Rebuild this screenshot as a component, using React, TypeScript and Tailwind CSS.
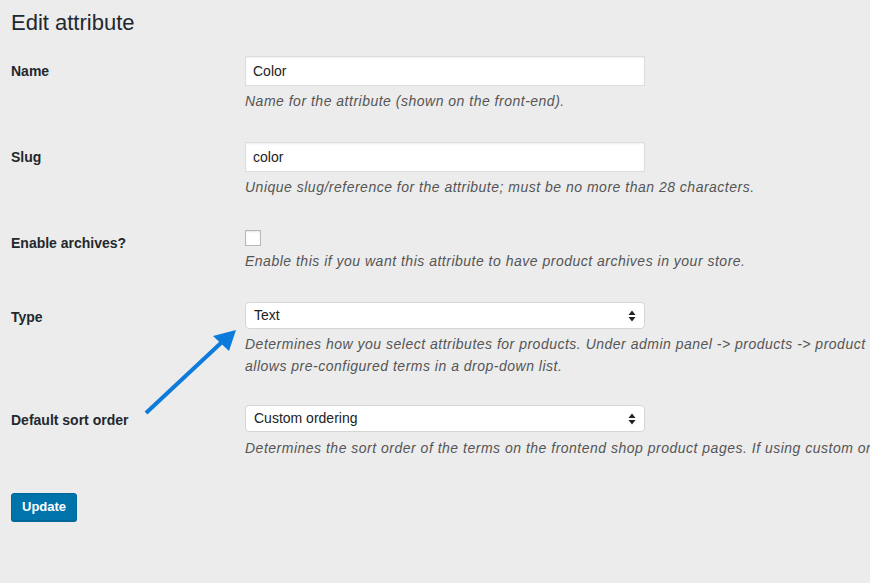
import React from 'react';

const font = { fontFamily: '"Liberation Sans", Arial, sans-serif' };

const Arrows = () => (
  <svg width="8" height="12" viewBox="0 0 8 12" className="absolute right-[8px] top-1/2 -translate-y-1/2 pointer-events-none">
    <path d="M4 0.5 L7.5 5 H0.5 Z" fill="#222" />
    <path d="M4 11.5 L7.5 7 H0.5 Z" fill="#222" />
  </svg>
);

const Row = ({ label, children }: { label: string; children: React.ReactNode }) => (
  <div className="flex">
    <div className="w-[234px] shrink-0 pt-[21px] text-[14px] leading-[18px] font-bold text-[#23282d]">{label}</div>
    <div className="py-[15px] min-w-0">{children}</div>
  </div>
);

const Desc = ({ children, className = '' }: { children: React.ReactNode; className?: string }) => (
  <p className={`text-[14px] leading-[22px] italic tracking-[0.5px] text-[#555] whitespace-nowrap ${className}`}>{children}</p>
);

export default function App() {
  return (
    <div className="relative min-h-screen w-full overflow-hidden bg-[#ececec] pl-[11px] pt-[8px]" style={font}>
      <h1 className="text-[22px] leading-[29px] font-normal text-[#23282d] mb-[4px]">Edit attribute</h1>

      <Row label="Name">
        <input
          defaultValue="Color"
          className="block w-[400px] h-[30px] bg-white border border-[#ddd] shadow-[inset_0_1px_2px_rgba(0,0,0,0.07)] px-[7px] text-[14px] text-[#222] outline-none"
        />
        <Desc className="mt-[4px]">Name for the attribute (shown on the front-end).</Desc>
      </Row>

      <Row label="Slug">
        <input
          defaultValue="color"
          className="block w-[400px] h-[30px] bg-white border border-[#ddd] shadow-[inset_0_1px_2px_rgba(0,0,0,0.07)] px-[7px] text-[14px] text-[#222] outline-none"
        />
        <Desc className="mt-[4px]">Unique slug/reference for the attribute; must be no more than 28 characters.</Desc>
      </Row>

      <Row label="Enable archives?">
        <div className="pt-[2px] h-[18px]">
          <div className="w-[16px] h-[16px] bg-white border border-[#b4b9be] shadow-[inset_0_1px_2px_rgba(0,0,0,0.1)]" />
        </div>
        <Desc className="mt-[4px]">Enable this if you want this attribute to have product archives in your store.</Desc>
      </Row>

      <Row label="Type">
        <div className="relative w-[400px] h-[27px] bg-white border border-[#d5d5d5] rounded-[4px] text-[14px] leading-[25px] text-[#222] pl-[8px]">
          Text
          <Arrows />
        </div>
        <Desc className="mt-[4px] mb-[-2px]">
          Determines how you select attributes for products. Under admin panel -&gt; products -&gt; product data -&gt; attributes -&gt; values, Text allows manual input whereas, select
          <br />
          allows pre-configured terms in a drop-down list.
        </Desc>
      </Row>

      <Row label="Default sort order">
        <div className="relative w-[400px] h-[27px] bg-white border border-[#d5d5d5] rounded-[4px] text-[14px] leading-[25px] text-[#222] pl-[8px]">
          Custom ordering
          <Arrows />
        </div>
        <Desc className="mt-[5px]">
          Determines the sort order of the terms on the frontend shop product pages. If using custom ordering, you can drag and drop the terms in this attribute.
        </Desc>
      </Row>

      <div className="pt-[19px]">
        <button className="h-[28px] px-[10px] rounded-[3px] bg-[#0073aa] border border-[#006799] shadow-[0_1px_0_#006799] text-white text-[13px] font-bold leading-[26px]">
          Update
        </button>
      </div>

      <svg className="absolute left-0 top-0 pointer-events-none" width="870" height="583">
        <line x1="146" y1="413" x2="222" y2="342" stroke="#0d7bdc" strokeWidth="4" strokeLinecap="butt" />
        <path d="M236 330 L213 336 L229 351 Z" fill="#0d7bdc" />
      </svg>
    </div>
  );
}
